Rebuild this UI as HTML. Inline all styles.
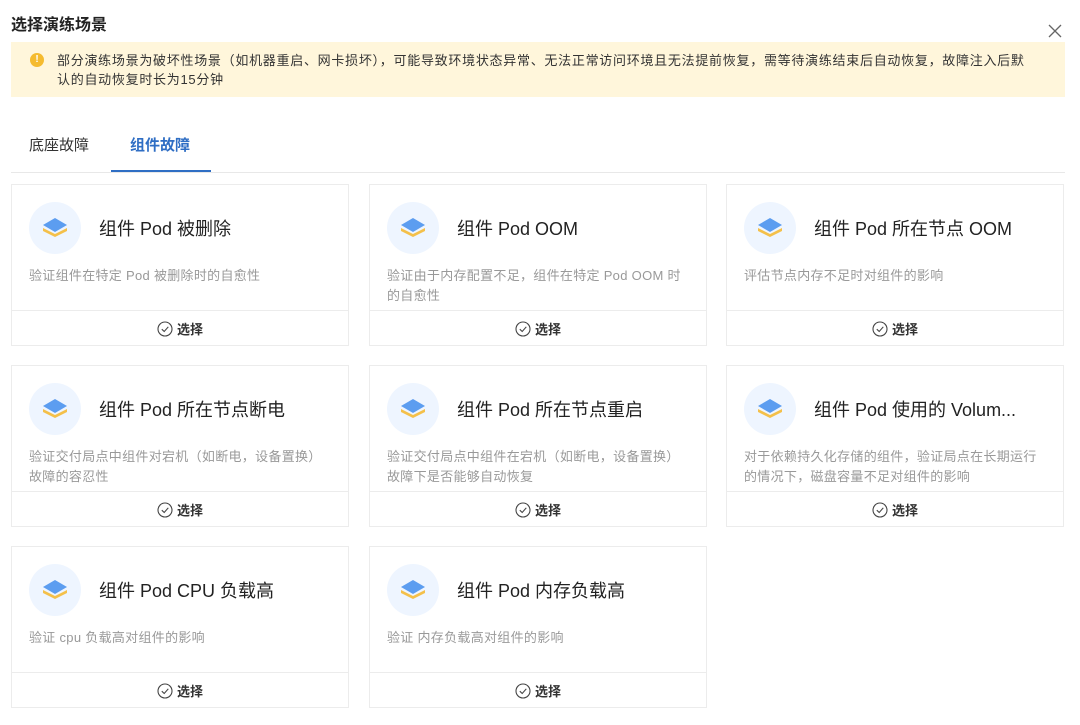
<!DOCTYPE html>
<html><head><meta charset="utf-8"><style>
*{margin:0;padding:0;box-sizing:border-box}
body{width:1080px;height:725px;background:#fff;font-family:"Liberation Sans","Noto Sans CJK SC",sans-serif;position:relative;overflow:hidden;color:#333}
.h{position:absolute;left:11px;top:11px;font-size:16px;font-weight:bold;color:#222}
.x{position:absolute;left:1048px;top:24px}
.ban{position:absolute;left:11px;top:42px;width:1054px;height:55px;background:#fff6db;font-size:13px;letter-spacing:0.72px;color:#333;line-height:19px;padding:9px 0 0 46px}
.ic{position:absolute;left:19px;top:11px;width:14px;height:14px;border-radius:50%;background:#f5bb2f;color:#fff;font-size:10px;font-weight:bold;text-align:center;line-height:14px;letter-spacing:0}
.tab{position:absolute;top:134px;font-size:15px}
.line{position:absolute;left:11px;top:172px;width:1054px;height:1px;background:#e8e8e8}
.ul{position:absolute;left:111px;top:170px;width:100px;height:2px;background:#2f6ec4}
.card{position:absolute;width:338px;height:162px;border:1px solid #ececec}
.circ{position:absolute;left:17px;top:17px;width:52px;height:52px;border-radius:50%;background:#eef5ff}
.circ svg{position:absolute;left:13px;top:14px}
.t{position:absolute;left:87px;top:30px;font-size:18px;color:#222;white-space:nowrap}
.d{position:absolute;left:17px;top:81px;width:304px;font-size:13px;letter-spacing:0.3px;color:#999;line-height:20px}
.b{position:absolute;left:0;top:125px;width:336px;height:36px;border-top:1px solid #ececec;font-size:13px;font-weight:bold;color:#333;display:flex;align-items:center;justify-content:center;gap:4px}
</style></head><body>
<div class="h">选择演练场景</div>
<svg class="x" width="14" height="14" viewBox="0 0 14 14"><path d="M1 1L13 13M13 1L1 13" stroke="#666" stroke-width="1.3"/></svg>
<div class="ban"><div class="ic">!</div>部分演练场景为破坏性场景（如机器重启、网卡损坏），可能导致环境状态异常、无法正常访问环境且无法提前恢复，需等待演练结束后自动恢复，故障注入后默<br>认的自动恢复时长为15分钟</div>
<div class="tab" style="left:29px;color:#333">底座故障</div>
<div class="tab" style="left:130px;color:#2f6ec4;font-weight:bold">组件故障</div>
<div class="line"></div><div class="ul"></div>

<div id="cards"></div>
<script>
var data=[["组件 Pod 被删除","验证组件在特定 Pod 被删除时的自愈性"],["组件 Pod OOM","验证由于内存配置不足，组件在特定 Pod OOM 时的自愈性"],["组件 Pod 所在节点 OOM","评估节点内存不足时对组件的影响"],["组件 Pod 所在节点断电","验证交付局点中组件对宕机（如断电，设备置换）故障的容忍性"],["组件 Pod 所在节点重启","验证交付局点中组件在宕机（如断电，设备置换）故障下是否能够自动恢复"],["组件 Pod 使用的 Volum...","对于依赖持久化存储的组件，验证局点在长期运行的情况下，磁盘容量不足对组件的影响"],["组件 Pod CPU 负载高","验证 cpu 负载高对组件的影响"],["组件 Pod 内存负载高","验证 内存负载高对组件的影响"]];
var xs=[11,369,726],ys=[184,365,546],h='';
data.forEach(function(c,i){h+='<div class="card" style="left:'+xs[i%3]+'px;top:'+ys[Math.floor(i/3)]+'px"><div class="circ"><svg width="26" height="24" viewBox="0 0 26 24"><path d="M1 12L13 18L25 12L25 15L13 21L1 15Z" fill="#f4c04a"/><path d="M13 2L25 9L13 16L1 9Z" fill="#5c9df0"/></svg></div><div class="t">'+c[0]+'</div><div class="d">'+c[1]+'</div><div class="b"><svg width="16" height="16" viewBox="0 0 16 16"><circle cx="8" cy="8" r="7" fill="none" stroke="#444" stroke-width="1.1"/><path d="M4.8 8.2L7.2 10.5L11.3 5.8" fill="none" stroke="#444" stroke-width="1.1"/></svg>选择</div></div>'});
document.getElementById('cards').innerHTML=h;
</script>
</body></html>
